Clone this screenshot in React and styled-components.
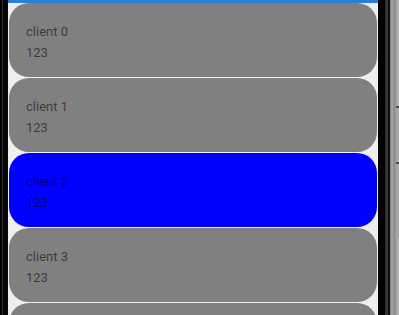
import React from 'react'
import styled, { createGlobalStyle } from 'styled-components'

const GlobalStyle = createGlobalStyle`
    html, body {
        margin: 0;
        padding: 0;
        background: #000;
    }
    body {
        font-family: Roboto, "Noto Sans", Arial, sans-serif;
    }
`

const Device = styled.div`
    display: flex;
    width: 399px;
    height: 315px;
    overflow: hidden;
    background: #000;
`

const LeftBezel = styled.div`
    width: 8px;
    flex-shrink: 0;
    background: linear-gradient(to right, #000 0, #000 2px, #2c2c2c 2px, #2c2c2c 3px, #060606 3px, #060606 8px);
`

const RightBezel = styled.div`
    position: relative;
    width: 21px;
    flex-shrink: 0;
    background: linear-gradient(
        to right,
        #030303 0,
        #030303 7px,
        #2e2e2e 7px,
        #3a3a3a 10px,
        #0c0c0c 10px,
        #0c0c0c 12px,
        #7a7a7a 12px,
        #a8a8a8 14px,
        #8c8c8c 16px,
        #9a9a9a 18px,
        #bdbdbd 21px
    );
`

const SideKey = styled.div`
    position: absolute;
    right: 0;
    width: 3px;
    background: #a6a6a6;
    border-top: 2px solid #4a4a4a;
`

const Screen = styled.div`
    width: 370px;
    flex-shrink: 0;
    display: flex;
    flex-direction: column;
    background: #eeeeee;
`

const AppBarEdge = styled.div`
    height: 3px;
    flex-shrink: 0;
    background: #2b7fd5;
`

const List = styled.div`
    display: flex;
    flex-direction: column;
    gap: 1px;
    padding: 0 1px;
    overflow: hidden;
`

const Card = styled.div`
    height: 74px;
    flex-shrink: 0;
    box-sizing: border-box;
    display: flex;
    flex-direction: column;
    gap: 6px;
    padding: 21px 17px;
    border-radius: 20px;
    background: ${props => (props.selected ? '#0000ff' : '#808080')};
`

const Line = styled.div`
    font-size: 13px;
    line-height: 15px;
    color: rgba(0, 0, 0, 0.56);
    white-space: nowrap;
`

const clients = [0, 1, 2, 3]

export default function App() {
    return (
        <>
            <GlobalStyle />
            <Device>
                <LeftBezel />
                <Screen>
                    <AppBarEdge />
                    <List>
                        {clients.map(i => (
                            <Card key={i} selected={i === 2}>
                                <Line>client {i}</Line>
                                <Line>123</Line>
                            </Card>
                        ))}
                        {/* next row only peeks in at the bottom edge */}
                        <Card />
                    </List>
                </Screen>
                <RightBezel>
                    <SideKey style={{ top: 106, height: 52 }} />
                    <SideKey style={{ top: 162, height: 74 }} />
                </RightBezel>
            </Device>
        </>
    )
}
